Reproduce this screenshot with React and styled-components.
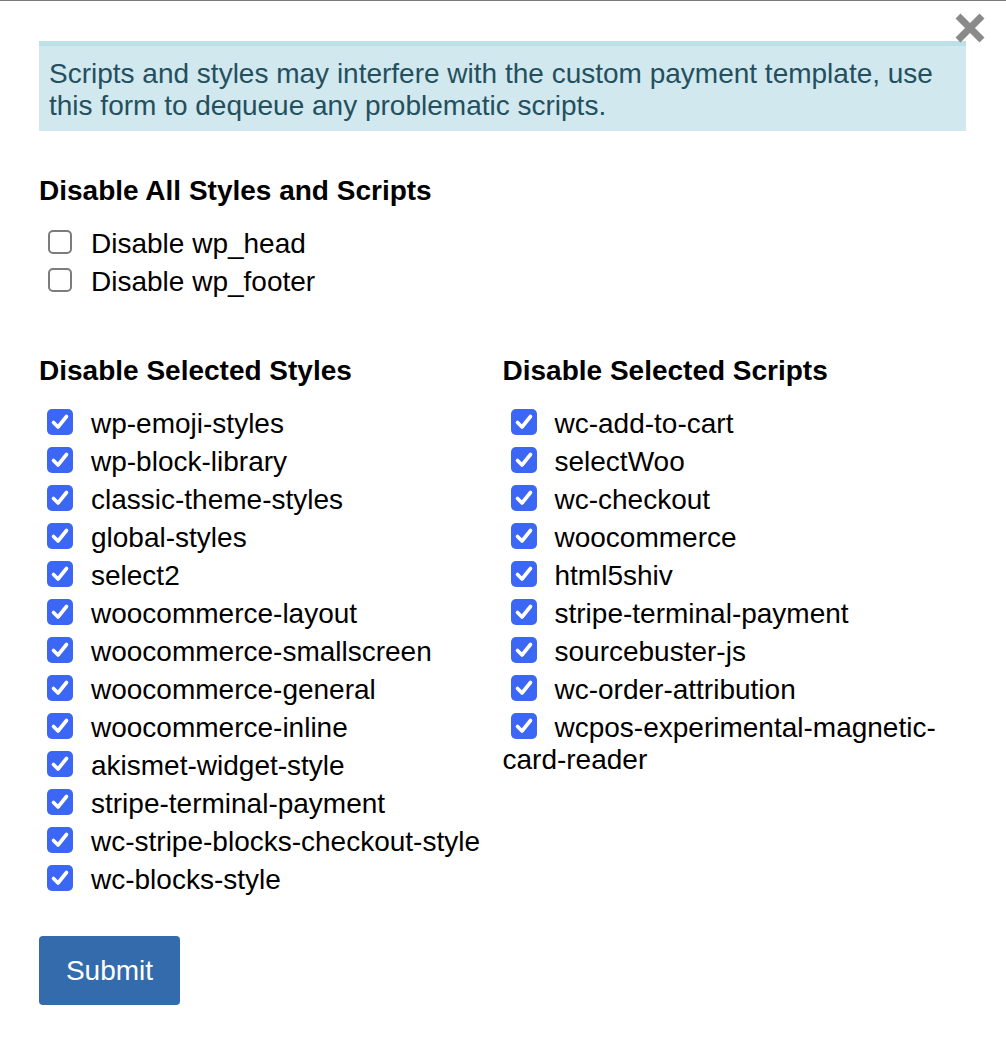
import React, { useState } from 'react';
import styled, { createGlobalStyle } from 'styled-components';

const GlobalStyle = createGlobalStyle`
  html, body {
    margin: 0;
    padding: 0;
    background: #fff;
  }
  body {
    font-family: "Liberation Sans", Arial, Helvetica, sans-serif;
    color: #000;
  }
`;

const Modal = styled.div`
  position: relative;
  border-top: 1px solid #7a7a7a;
  min-height: 1041px;
  padding: 40px 40px 0 39px;
  box-sizing: border-box;
`;

const CloseButton = styled.button`
  position: absolute;
  top: 11px;
  right: 20px;
  width: 32px;
  height: 32px;
  padding: 0;
  border: 0;
  background: none;
  cursor: pointer;
  svg { display: block; }
`;

const Notice = styled.div`
  background: #d1e8ef;
  border-top: 5px solid #bde0e7;
  color: #24505e;
  font-size: 28px;
  line-height: 32px;
  padding: 12px 10px 9px;
`;

const Heading = styled.h3`
  margin: 0;
  font-size: 28px;
  line-height: 32px;
  font-weight: bold;
`;

const Section = styled.div`
  margin-top: ${(p) => p.$top}px;
`;

const List = styled.div`
  margin-top: 18px;
`;

const Row = styled.label`
  display: block;
  font-size: 28px;
  line-height: 32px;
  padding: 3px 0;
  cursor: pointer;
`;

const Box = styled.span`
  display: inline-block;
  box-sizing: border-box;
  width: ${(p) => (p.$checked ? 26 : 24)}px;
  height: ${(p) => (p.$checked ? 26 : 24)}px;
  margin: 0 ${(p) => (p.$checked ? 18 : 19)}px 0 ${(p) => (p.$checked ? 8 : 9)}px;
  vertical-align: ${(p) => (p.$checked ? '-2px' : '-1px')};
  border-radius: 5px;
  border: ${(p) => (p.$checked ? 'none' : '2px solid #7c7c7c')};
  background: ${(p) => (p.$checked ? '#3c67f5' : '#fff')};
  svg { display: block; }
`;

const Columns = styled.div`
  display: grid;
  grid-template-columns: 1fr 1fr;
  margin-top: 54px;
`;

const Submit = styled.button`
  margin-top: 37px;
  width: 141px;
  height: 69px;
  border: 0;
  border-radius: 4px;
  background: #346bac;
  color: #fff;
  font-family: inherit;
  font-size: 28px;
  cursor: pointer;
`;

const styles = [
  'wp-emoji-styles',
  'wp-block-library',
  'classic-theme-styles',
  'global-styles',
  'select2',
  'woocommerce-layout',
  'woocommerce-smallscreen',
  'woocommerce-general',
  'woocommerce-inline',
  'akismet-widget-style',
  'stripe-terminal-payment',
  'wc-stripe-blocks-checkout-style',
  'wc-blocks-style',
];

const scripts = [
  'wc-add-to-cart',
  'selectWoo',
  'wc-checkout',
  'woocommerce',
  'html5shiv',
  'stripe-terminal-payment',
  'sourcebuster-js',
  'wc-order-attribution',
  'wcpos-experimental-magnetic-card-reader',
];

function Check({ label, checked, onToggle }) {
  return (
    <Row onClick={onToggle}>
      <Box $checked={checked}>
        {checked && (
          <svg width="26" height="26" viewBox="0 0 26 26">
            <path d="M6.5 13.5 L11 18 L19.5 7.5" fill="none" stroke="#fff" strokeWidth="3.6" strokeLinecap="round" strokeLinejoin="round" />
          </svg>
        )}
      </Box>
      {label}
    </Row>
  );
}

export default function App() {
  const [checked, setChecked] = useState(() => {
    const s = {};
    styles.forEach((n) => (s['style:' + n] = true));
    scripts.forEach((n) => (s['script:' + n] = true));
    return s;
  });

  const toggle = (key) => setChecked({ ...checked, [key]: !checked[key] });

  return (
    <Modal>
      <GlobalStyle />
      <CloseButton aria-label="Close">
        <svg width="32" height="32" viewBox="0 0 32 32">
          <path d="M4 4 L28 28 M28 4 L4 28" stroke="#8a8a8a" strokeWidth="7" />
        </svg>
      </CloseButton>
      <Notice>
        Scripts and styles may interfere with the custom payment template, use this form to dequeue any problematic scripts.
      </Notice>

      <Section $top={44}>
        <Heading>Disable All Styles and Scripts</Heading>
        <List>
          <Check label="Disable wp_head" checked={!!checked.wp_head} onToggle={() => toggle('wp_head')} />
          <Check label="Disable wp_footer" checked={!!checked.wp_footer} onToggle={() => toggle('wp_footer')} />
        </List>
      </Section>

      <Columns>
        <div>
          <Heading>Disable Selected Styles</Heading>
          <List>
            {styles.map((n) => (
              <Check key={n} label={n} checked={!!checked['style:' + n]} onToggle={() => toggle('style:' + n)} />
            ))}
          </List>
        </div>
        <div>
          <Heading>Disable Selected Scripts</Heading>
          <List>
            {scripts.map((n) => (
              <Check key={n} label={n} checked={!!checked['script:' + n]} onToggle={() => toggle('script:' + n)} />
            ))}
          </List>
        </div>
      </Columns>

      <Submit>Submit</Submit>
    </Modal>
  );
}
